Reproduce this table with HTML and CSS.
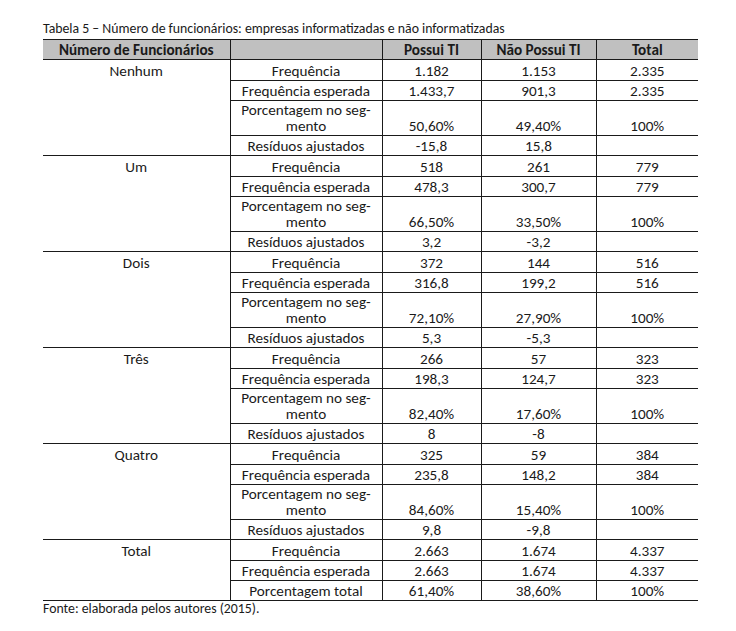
FILE: index.html
```html
<!DOCTYPE html>
<html lang="pt">
<head>
<meta charset="utf-8">
<title>Tabela 5</title>
<link rel="stylesheet" href="styles.css">
</head>
<body>
<div class="page">
  <p class="caption">Tabela 5 – Número de funcionários: empresas informatizadas e não informatizadas</p>
  <table class="data">
    <colgroup>
      <col class="c1"><col class="c2"><col class="c3"><col class="c4"><col class="c5">
    </colgroup>
    <thead>
      <tr><th>Número de Funcionários</th><th class="v"></th><th class="v">Possui TI</th><th class="v">Não Possui TI</th><th class="v">Total</th></tr>
    </thead>
    <tbody>
      <tr class="gs"><td class="grp" rowspan="4">Nenhum</td><td class="v">Frequência</td><td class="v">1.182</td><td class="v">1.153</td><td class="v">2.335</td></tr>
      <tr><td class="v">Frequência esperada</td><td class="v">1.433,7</td><td class="v">901,3</td><td class="v">2.335</td></tr>
      <tr class="dbl"><td class="v">Porcentagem no seg-<br>mento</td><td class="v">50,60%</td><td class="v">49,40%</td><td class="v">100%</td></tr>
      <tr><td class="v">Resíduos ajustados</td><td class="v">-15,8</td><td class="v">15,8</td><td class="v"></td></tr>

      <tr class="gs"><td class="grp" rowspan="4">Um</td><td class="v">Frequência</td><td class="v">518</td><td class="v">261</td><td class="v">779</td></tr>
      <tr><td class="v">Frequência esperada</td><td class="v">478,3</td><td class="v">300,7</td><td class="v">779</td></tr>
      <tr class="dbl"><td class="v">Porcentagem no seg-<br>mento</td><td class="v">66,50%</td><td class="v">33,50%</td><td class="v">100%</td></tr>
      <tr><td class="v">Resíduos ajustados</td><td class="v">3,2</td><td class="v">-3,2</td><td class="v"></td></tr>

      <tr class="gs"><td class="grp" rowspan="4">Dois</td><td class="v">Frequência</td><td class="v">372</td><td class="v">144</td><td class="v">516</td></tr>
      <tr><td class="v">Frequência esperada</td><td class="v">316,8</td><td class="v">199,2</td><td class="v">516</td></tr>
      <tr class="dbl"><td class="v">Porcentagem no seg-<br>mento</td><td class="v">72,10%</td><td class="v">27,90%</td><td class="v">100%</td></tr>
      <tr><td class="v">Resíduos ajustados</td><td class="v">5,3</td><td class="v">-5,3</td><td class="v"></td></tr>

      <tr class="gs"><td class="grp" rowspan="4">Três</td><td class="v">Frequência</td><td class="v">266</td><td class="v">57</td><td class="v">323</td></tr>
      <tr><td class="v">Frequência esperada</td><td class="v">198,3</td><td class="v">124,7</td><td class="v">323</td></tr>
      <tr class="dbl"><td class="v">Porcentagem no seg-<br>mento</td><td class="v">82,40%</td><td class="v">17,60%</td><td class="v">100%</td></tr>
      <tr><td class="v">Resíduos ajustados</td><td class="v">8</td><td class="v">-8</td><td class="v"></td></tr>

      <tr class="gs"><td class="grp" rowspan="4">Quatro</td><td class="v">Frequência</td><td class="v">325</td><td class="v">59</td><td class="v">384</td></tr>
      <tr><td class="v">Frequência esperada</td><td class="v">235,8</td><td class="v">148,2</td><td class="v">384</td></tr>
      <tr class="dbl"><td class="v">Porcentagem no seg-<br>mento</td><td class="v">84,60%</td><td class="v">15,40%</td><td class="v">100%</td></tr>
      <tr><td class="v">Resíduos ajustados</td><td class="v">9,8</td><td class="v">-9,8</td><td class="v"></td></tr>

      <tr class="gs"><td class="grp" rowspan="3">Total</td><td class="v">Frequência</td><td class="v">2.663</td><td class="v">1.674</td><td class="v">4.337</td></tr>
      <tr><td class="v">Frequência esperada</td><td class="v">2.663</td><td class="v">1.674</td><td class="v">4.337</td></tr>
      <tr><td class="v">Porcentagem total</td><td class="v">61,40%</td><td class="v">38,60%</td><td class="v">100%</td></tr>
    </tbody>
  </table>
  <p class="source">Fonte: elaborada pelos autores (2015).</p>
</div>
</body>
</html>
```

FILE: styles.css
```css
html, body {
  margin: 0;
  padding: 0;
  background: #ffffff;
}

.page {
  padding: 21px 0 0 43px;
  font-family: "Carlito", "Lato", "Liberation Sans", sans-serif;
  color: #1a1a1a;
}

.caption {
  margin: 0 0 2px 0;
  font-size: 13.8px;
  line-height: 16px;
}

.data {
  border-collapse: collapse;
  table-layout: fixed;
  width: 655px;
  font-size: 15.2px;
}

.c1 { width: 187px; }
.c2 { width: 152px; }
.c3 { width: 99px; }
.c4 { width: 115px; }
.c5 { width: 102px; }

.data th,
.data td {
  padding: 2px 2px 1px 2px;
  text-align: center;
  line-height: 16px;
}

.data th {
  background: #c0c0c0;
  font-weight: bold;
  border-top: 1px solid #1a1a1a;
  border-bottom: 1px solid #1a1a1a;
}

.data .v {
  border-left: 1px solid #1a1a1a;
  border-bottom: 1px solid #1a1a1a;
}

.data td.v {
  vertical-align: bottom;
}

.data .grp {
  vertical-align: top;
  border-bottom: 1px solid #1a1a1a;
}

.data tr.gs td {
  border-top: 1px solid #1a1a1a;
  padding-top: 3px;
}

.data tr.dbl td {
  padding-top: 2px;
  line-height: 15.5px;
}

.source {
  margin: 0;
  font-size: 13.8px;
  line-height: 16px;
}
```
